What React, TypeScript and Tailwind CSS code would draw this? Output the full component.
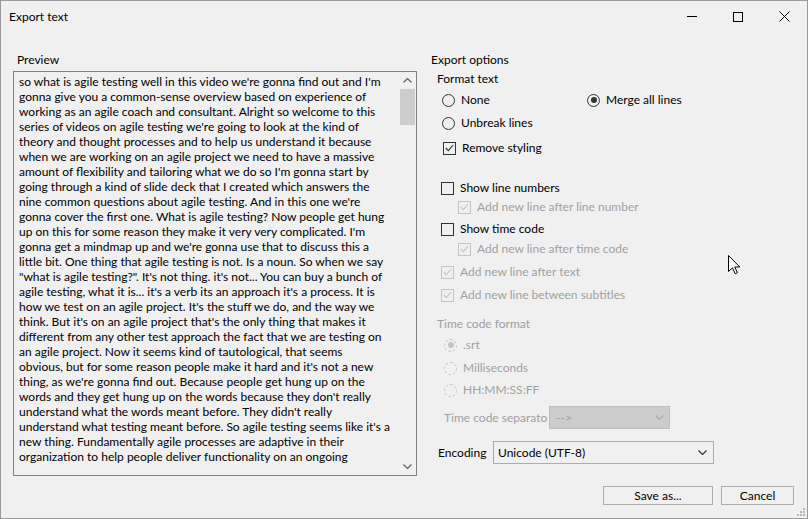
import type { ReactNode } from "react";

const previewLines = [
  "so what is agile testing well in this video we're gonna find out and I'm",
  "gonna give you a common-sense overview based on experience of",
  "working as an agile coach and consultant. Alright so welcome to this",
  "series of videos on agile testing we're going to look at the kind of",
  "theory and thought processes and to help us understand it because",
  "when we are working on an agile project we need to have a massive",
  "amount of flexibility and tailoring what we do so I'm gonna start by",
  "going through a kind of slide deck that I created which answers the",
  "nine common questions about agile testing. And in this one we're",
  "gonna cover the first one. What is agile testing? Now people get hung",
  "up on this for some reason they make it very very complicated. I'm",
  "gonna get a mindmap up and we're gonna use that to discuss this a",
  "little bit. One thing that agile testing is not. Is a noun. So when we say",
  "\"what is agile testing?\". It's not thing. it's not... You can buy a bunch of",
  "agile testing, what it is... it's a verb its an approach it's a process. It is",
  "how we test on an agile project. It's the stuff we do, and the way we",
  "think. But it's on an agile project that's the only thing that makes it",
  "different from any other test approach the fact that we are testing on",
  "an agile project. Now it seems kind of tautological, that seems",
  "obvious, but for some reason people make it hard and it's not a new",
  "thing, as we're gonna find out. Because people get hung up on the",
  "words and they get hung up on the words because they don't really",
  "understand what the words meant before. They didn't really",
  "understand what testing meant before. So agile testing seems like it's a",
  "new thing. Fundamentally agile processes are adaptive in their",
  "organization to help people deliver functionality on an ongoing",
];

function Chevron({ up, color = "#606060" }: { up?: boolean; color?: string }) {
  return (
    <svg width="9" height="5" viewBox="0 0 9 5" aria-hidden>
      <path
        d={up ? "M0.5 4.5 L4.5 0.5 L8.5 4.5" : "M0.5 0.5 L4.5 4.5 L8.5 0.5"}
        fill="none"
        stroke={color}
        strokeWidth="1.2"
      />
    </svg>
  );
}

function Radio({ checked, disabled, children }: { checked?: boolean; disabled?: boolean; children: ReactNode }) {
  return (
    <div className="flex items-center gap-[6px]">
      <span
        className={`flex size-[13px] items-center justify-center rounded-full border ${
          disabled ? "border-dashed border-[#c4c4c4]" : "border-[#333333]"
        }`}
      >
        {checked && <span className={`size-[6px] rounded-full ${disabled ? "bg-[#c4c4c4]" : "bg-[#333333]"}`} />}
      </span>
      <span className={disabled ? "text-[#a0a0a0]" : "text-black"}>{children}</span>
    </div>
  );
}

function Check({ checked, disabled, children }: { checked?: boolean; disabled?: boolean; children: ReactNode }) {
  const c = disabled ? "#c4c4c4" : "#333333";
  return (
    <div className="flex items-center gap-[6px]">
      <span className={`flex size-[13px] items-center justify-center border ${disabled ? "border-[#c4c4c4]" : "border-[#333333]"}`}>
        {checked && (
          <svg width="9" height="8" viewBox="0 0 9 8" aria-hidden>
            <path d="M0.8 4 L3.3 6.6 L8.2 1" fill="none" stroke={c} strokeWidth="1.1" />
          </svg>
        )}
      </span>
      <span className={disabled ? "text-[#a0a0a0]" : "text-black"}>{children}</span>
    </div>
  );
}

export default function App() {
  return (
    <div
      className="relative h-[519px] w-[808px] overflow-hidden border border-[#9a9a9a] bg-[#f0f0f0] text-[12px] leading-[16px] text-black"
      style={{ fontFamily: "Lato, 'Noto Sans', sans-serif" }}
    >
      {/* title bar */}
      <div className="flex h-[31px] items-center">
        <span className="pl-[8px]">Export text</span>
        <div className="ml-auto flex h-full">
          <div className="flex w-[46px] items-center justify-center">
            <span className="h-px w-[10px] bg-black" />
          </div>
          <div className="flex w-[46px] items-center justify-center">
            <span className="size-[10px] border border-black" />
          </div>
          <div className="flex w-[46px] items-center justify-center">
            <svg width="11" height="11" viewBox="0 0 11 11" aria-hidden>
              <path d="M0.5 0.5 L10.5 10.5 M10.5 0.5 L0.5 10.5" stroke="#000" strokeWidth="1" />
            </svg>
          </div>
        </div>
      </div>

      <div className="flex pl-[12px]">
        {/* preview */}
        <div className="w-[404px]">
          <div className="mt-[20px] h-[16px] pl-[4px]">Preview</div>
          <div className="mt-[3px] flex h-[405px] border border-[#828282]">
            <div className="flex-1 overflow-hidden pl-[5px] pt-[2px] leading-[15px]">
              {previewLines.map((line, i) => (
                <div key={i} className="whitespace-nowrap">
                  {line}
                </div>
              ))}
            </div>
            <div className="flex w-[17px] flex-col items-center">
              <div className="flex h-[17px] items-center justify-center">
                <Chevron up />
              </div>
              <div className="h-[36px] w-[15px] bg-[#cdcdcd]" />
              <div className="mt-auto flex h-[17px] items-center justify-center">
                <Chevron />
              </div>
            </div>
          </div>
        </div>

        {/* options */}
        <div className="ml-[14px] flex flex-1 flex-col">
          <div className="mt-[20px] h-[16px]">Export options</div>
          <div className="mt-[3px] h-[16px] pl-[6px]">Format text</div>
          <div className="mt-[5px] flex h-[16px] pl-[11px]">
            <div className="w-[145px]">
              <Radio>None</Radio>
            </div>
            <Radio checked>Merge all lines</Radio>
          </div>
          <div className="mt-[7px] h-[16px] pl-[11px]">
            <Radio>Unbreak lines</Radio>
          </div>
          <div className="mt-[9px] h-[16px] pl-[12px]">
            <Check checked>Remove styling</Check>
          </div>
          <div className="mt-[24px] h-[16px] pl-[10px]">
            <Check>Show line numbers</Check>
          </div>
          <div className="mt-[3px] h-[16px] pl-[27px]">
            <Check checked disabled>
              Add new line after line number
            </Check>
          </div>
          <div className="mt-[6px] h-[16px] pl-[10px]">
            <Check>Show time code</Check>
          </div>
          <div className="mt-[4px] h-[16px] pl-[27px]">
            <Check checked disabled>
              Add new line after time code
            </Check>
          </div>
          <div className="mt-[7px] h-[16px] pl-[10px]">
            <Check checked disabled>
              Add new line after text
            </Check>
          </div>
          <div className="mt-[7px] h-[16px] pl-[10px]">
            <Check checked disabled>
              Add new line between subtitles
            </Check>
          </div>
          <div className="mt-[13px] h-[16px] pl-[6px] text-[#a0a0a0]">Time code format</div>
          <div className="mt-[5px] h-[16px] pl-[13px]">
            <Radio checked disabled>
              .srt
            </Radio>
          </div>
          <div className="mt-[7px] h-[16px] pl-[13px]">
            <Radio disabled>Milliseconds</Radio>
          </div>
          <div className="mt-[6px] h-[16px] pl-[13px]">
            <Radio disabled>HH:MM:SS:FF</Radio>
          </div>
          <div className="mt-[8px] flex h-[23px] items-center pl-[13px]">
            <span className="w-[105px] whitespace-nowrap text-[#a0a0a0]">Time code separato</span>
            <div className="flex h-[23px] w-[121px] items-center border border-[#bfbfbf] bg-[#cccccc] pl-[6px] pr-[5px] text-[#a0a0a0]">
              <span>--&gt;</span>
              <span className="ml-auto flex">
                <Chevron color="#a8a8a8" />
              </span>
            </div>
          </div>
          <div className="mt-[12px] flex h-[23px] items-center pl-[7px]">
            <span className="w-[55px]">Encoding</span>
            <div className="flex h-[23px] w-[221px] items-center border border-[#adadad] bg-[#f0f0f0] pl-[4px] pr-[6px]">
              <span>Unicode (UTF-8)</span>
              <span className="ml-auto flex">
                <Chevron color="#333333" />
              </span>
            </div>
          </div>
          <div className="mt-[22px] flex h-[19px] justify-end gap-[8px] pr-[13px]">
            <button className="flex h-[19px] w-[110px] items-center justify-center border border-[#adadad] bg-[#f0f0f0]">
              Save as...
            </button>
            <button className="flex h-[19px] w-[73px] items-center justify-center border border-[#adadad] bg-[#f0f0f0]">
              Cancel
            </button>
          </div>
        </div>
      </div>

      {/* resize grip */}
      <svg className="absolute bottom-[1px] right-[1px]" width="10" height="10" viewBox="0 0 10 10" aria-hidden>
        {[
          [7, 1],
          [4, 4],
          [7, 4],
          [1, 7],
          [4, 7],
          [7, 7],
        ].map(([x, y], i) => (
          <rect key={i} x={x} y={y} width="2" height="2" fill="#b8b8b8" />
        ))}
      </svg>

      {/* mouse pointer */}
      <svg className="absolute left-[727px] top-[254px]" width="13" height="20" viewBox="0 0 13 20" aria-hidden>
        <path
          d="M0.5 0.5 L0.5 16.5 L4.5 12.8 L7.2 18.8 L9.4 17.8 L6.8 12 L11.8 12 Z"
          fill="#fff"
          stroke="#000"
          strokeWidth="1"
          strokeLinejoin="round"
        />
      </svg>
    </div>
  );
}
